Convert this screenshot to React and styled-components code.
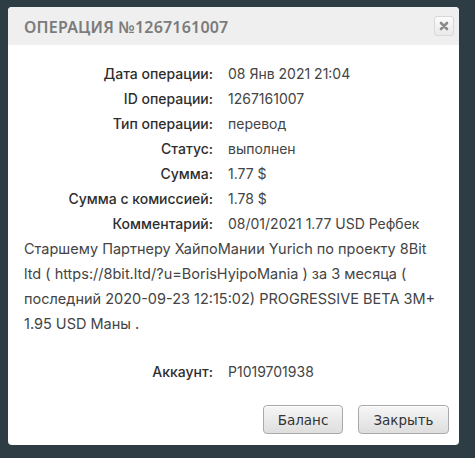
import React from "react";
import styled, { createGlobalStyle } from "styled-components";

const Global = createGlobalStyle`
  html, body { margin: 0; padding: 0; background: #2e3c44; }
  body { width: 475px; height: 458px; overflow: hidden; }
`;

const Page = styled.div`
  padding: 7px 16px 13px 8px;
  box-sizing: border-box;
  width: 475px;
  height: 458px;
`;

const Dialog = styled.div`
  background: #fff;
  border-radius: 4px;
  overflow: hidden;
  display: flex;
  flex-direction: column;
  height: 438px;
`;

const Header = styled.div`
  background: #efefef;
  height: 38px;
  display: flex;
  align-items: center;
  justify-content: space-between;
  padding: 0 5px 0 16px;
`;

const Title = styled.div`
  font-family: "Noto Sans", sans-serif;
  font-weight: 600;
  font-size: 16px;
  letter-spacing: 0.2px;
  color: #7b7b7b;
  padding-top: 1px;
`;

const CloseBtn = styled.div`
  width: 18px;
  height: 18px;
  border: 1px solid #d8d8d8;
  border-radius: 3px;
  background: linear-gradient(#fbfbfb, #e9e9e9);
  display: flex;
  align-items: center;
  justify-content: center;
`;

const Body = styled.div`
  flex: 1;
  padding: 16px 16px 0 16px;
  font-family: "Inter", sans-serif;
  font-size: 14.5px;
  color: #3a3a3a;
`;

const Grid = styled.div`
  display: grid;
  grid-template-columns: 189px 1fr;
  column-gap: 15px;
`;

const Label = styled.div`
  text-align: right;
  line-height: 25px;
  color: #2e2e2e;
  font-weight: 500;
  font-size: 14px;
`;

const Value = styled.div`
  line-height: 25px;
  color: #444;
  font-size: 14px;
`;

const Comment = styled.div`
  line-height: 25px;
  color: #444;
`;

const Spacer = styled.div`
  height: ${(p) => p.h}px;
`;

const Footer = styled.div`
  display: flex;
  justify-content: flex-end;
  gap: 15px;
  padding: 0 10px 11px 0;
`;

const Button = styled.button`
  font-family: "DejaVu Sans", Verdana, sans-serif;
  font-size: 13.5px;
  color: #333;
  height: 29px;
  width: ${(p) => p.w}px;
  padding: 0;
  border: 1px solid #a9a9a9;
  border-radius: 4px;
  background: linear-gradient(#f6f6f6, #dedede);
  box-shadow: inset 0 1px 0 #fff;
`;

const rows = [
  ["Дата операции:", "08 Янв 2021 21:04"],
  ["ID операции:", "1267161007"],
  ["Тип операции:", "перевод"],
  ["Статус:", "выполнен"],
  ["Сумма:", "1.77 $"],
  ["Сумма с комиссией:", "1.78 $"],
];

export default function App() {
  return (
    <Page>
      <Global />
      <Dialog>
        <Header>
          <Title>ОПЕРАЦИЯ №1267161007</Title>
          <CloseBtn>
            <svg width="10" height="10" viewBox="0 0 10 10">
              <path d="M2 2 L8 8 M8 2 L2 8" stroke="#8a8a8a" strokeWidth="2.6" strokeLinecap="round" />
            </svg>
          </CloseBtn>
        </Header>
        <Body>
          <Grid>
            {rows.map(([l, v]) => (
              <React.Fragment key={l}>
                <Label>{l}</Label>
                <Value>{v}</Value>
              </React.Fragment>
            ))}
            <Label>Комментарий:</Label>
            <Value>08/01/2021 1.77 USD Рефбек</Value>
          </Grid>
          <Comment>
            Старшему Партнеру ХайпоМании Yurich по проекту 8Bit ltd ( https://8bit.ltd/?u=BorisHyipoMania ) за 3 месяца ( последний 2020-09-23 12:15:02) PROGRESSIVE BETA 3M+ 1.95 USD Маны .
          </Comment>
          <Spacer h={23} />
          <Grid>
            <Label>Аккаунт:</Label>
            <Value>P1019701938</Value>
          </Grid>
        </Body>
        <Footer>
          <Button w={80}>Баланс</Button>
          <Button w={91}>Закрыть</Button>
        </Footer>
      </Dialog>
    </Page>
  );
}
